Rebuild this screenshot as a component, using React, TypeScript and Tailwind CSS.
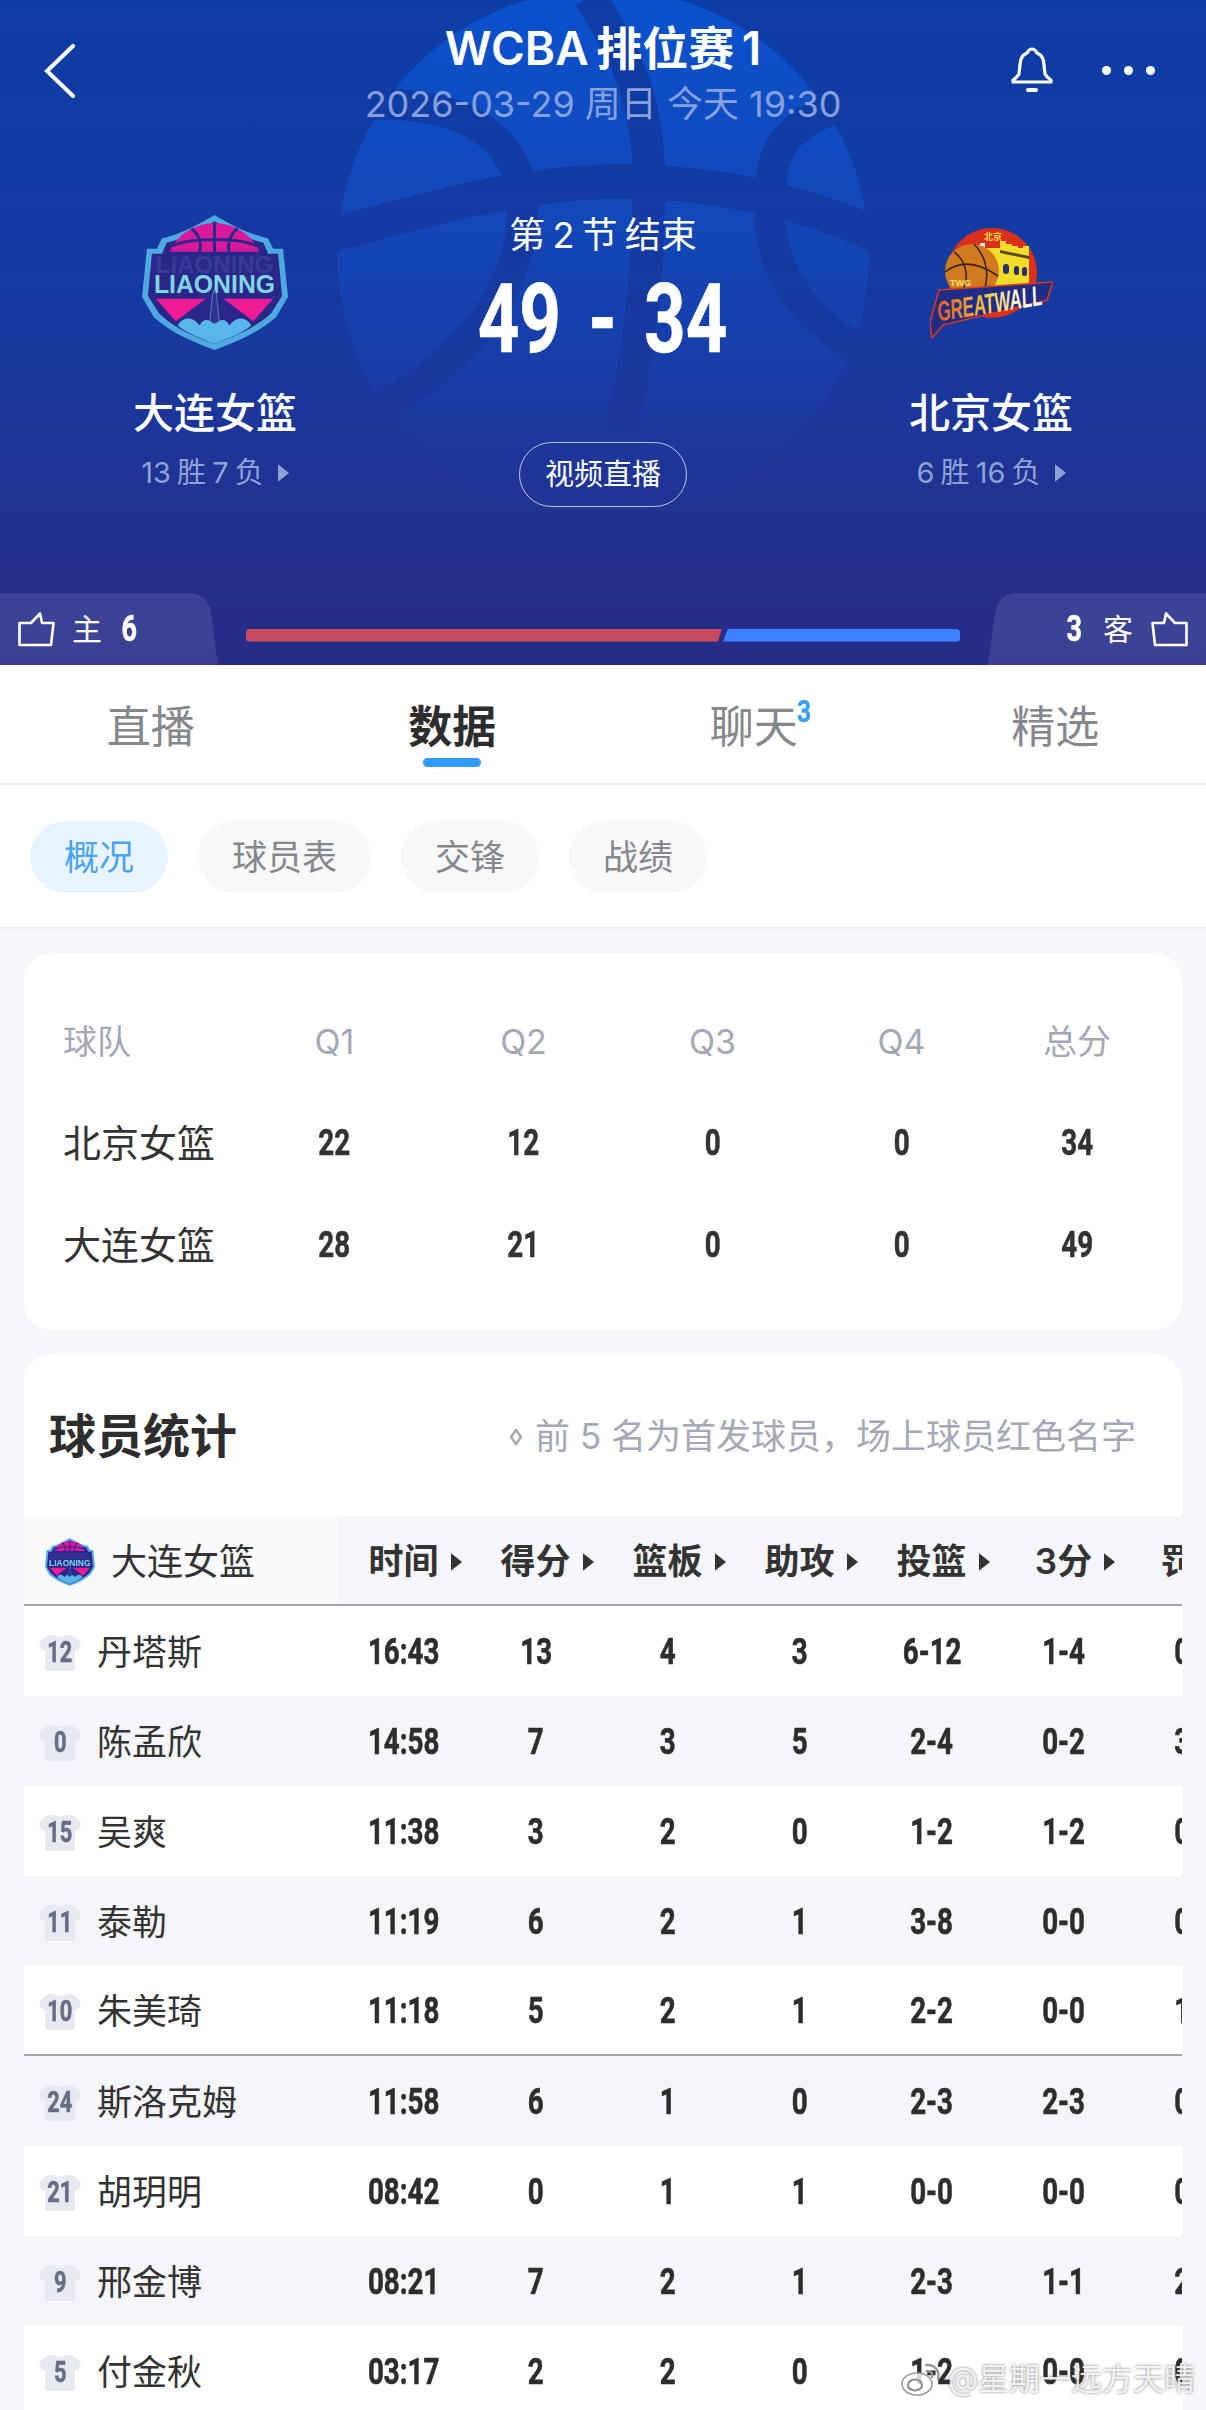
import React from 'react';

// column order: time, points, rebounds, assists, shots, threes, free throws
const PLAYERS = [
  { no: "12", name: "丹塔斯", stats: ["16:43", "13", "4", "3", "6-12", "1-4", "0-0"] },
  { no: "0", name: "陈孟欣", stats: ["14:58", "7", "3", "5", "2-4", "0-2", "3-3"] },
  { no: "15", name: "吴爽", stats: ["11:38", "3", "2", "0", "1-2", "1-2", "0-0"] },
  { no: "11", name: "泰勒", stats: ["11:19", "6", "2", "1", "3-8", "0-0", "0-0"] },
  { no: "10", name: "朱美琦", stats: ["11:18", "5", "2", "1", "2-2", "0-0", "1-1"], divider: true },
  { no: "24", name: "斯洛克姆", stats: ["11:58", "6", "1", "0", "2-3", "2-3", "0-0"] },
  { no: "21", name: "胡玥明", stats: ["08:42", "0", "1", "1", "0-0", "0-0", "0-0"] },
  { no: "9", name: "邢金博", stats: ["08:21", "7", "2", "1", "2-3", "1-1", "2-2"] },
  { no: "5", name: "付金秋", stats: ["03:17", "2", "2", "0", "1-2", "0-0", "0-0"] },
];

const STAT_HEADERS = ["时间", "得分", "篮板", "助攻", "投篮", "3分", "罚球"];

const QUARTERS = [
  { team: "北京女篮", scores: ["22", "12", "0", "0", "34"] },
  { team: "大连女篮", scores: ["28", "21", "0", "0", "49"] },
];

// the condensed DIN-like digits: Roboto bold squeezed sideways
function Num({ children, className }: { children: React.ReactNode; className?: string }) {
  return (
    <span className={`inline-block scale-x-[0.75] font-bold whitespace-nowrap [-webkit-text-stroke:0.6px_currentColor] [font-family:Roboto,sans-serif] ${className ?? ''}`}>
      {children}
    </span>
  );
}

function LiaoningLogo({ className }: { className: string }) {
  return (
    <svg viewBox="0 0 147 132" preserveAspectRatio="none" className={className}>
      <path d="M73 0 C90 10 106 18 127 23 L132 33 L142 33 L147 80 L135 100 C116 116 94 124 73 132 C52 124 30 116 12 100 L0 80 L5 33 L15 33 L20 23 C40 18 56 10 73 0 Z" fill="#4ea9e2" />
      <path d="M73 6 C90 15 105 23 122 27 L127 38 L137 38 L141 79 L130 96 C112 112 92 119 73 126 C54 119 34 112 17 96 L6 79 L10 38 L20 38 L25 27 C42 23 56 15 73 6 Z" fill="#29278a" />
      <path d="M28 36 C36 18 54 8 73 8 C92 8 110 18 118 36 Z" fill="#d9189a" />
      <path d="M73 8 V36 M50 13 C58 20 60 28 58 36 M96 13 C88 20 86 28 88 36 M31 30 C50 22 96 22 115 30" stroke="#29278a" strokeWidth="3" fill="none" />
      <text x="73" y="57" textAnchor="middle" fontSize="24" fontWeight="700" fill="#363a98" textLength="118" lengthAdjust="spacingAndGlyphs" fontFamily="Liberation Sans, sans-serif">LIAONING</text>
      <text x="73" y="76" textAnchor="middle" fontSize="25" fontWeight="700" fill="#7fd6e2" textLength="122" lengthAdjust="spacingAndGlyphs" fontFamily="Liberation Sans, sans-serif">LIAONING</text>
      <path d="M14 82 H64 L34 104 Z M132 82 H82 L112 104 Z" fill="#f01a97" />
      <path d="M68 106 L71 78 L73 72 L75 78 L78 106 Z" fill="#33308f" stroke="#4ea9e2" strokeWidth="0.7" />
      <path d="M36 108 C42 98 52 100 58 108 C62 100 68 102 73 107 C78 102 84 100 88 108 C94 100 104 98 110 108 C100 116 88 120 73 126 C58 120 46 116 36 108 Z" fill="#58b7e8" />
    </svg>
  );
}

function GreatWallLogo({ className }: { className: string }) {
  return (
    <svg viewBox="0 0 123 110" className={className}>
      <defs>
        <linearGradient id="gwText" x1="0" y1="0" x2="1" y2="0">
          <stop offset="0" stopColor="#e4551e" />
          <stop offset="0.45" stopColor="#f5c13c" />
          <stop offset="0.75" stopColor="#fff7c8" />
          <stop offset="1" stopColor="#ffffff" />
        </linearGradient>
      </defs>
      <circle cx="62" cy="45" r="45" fill="#dc2f1c" />
      <path d="M40 22 V17 H45 V20 H50 V15 H55 V62 H40 Z" fill="#f5f2da" />
      <path d="M55 20 H70 V13 H76 V16 H82 V18 H88 V20 H93 V18 H99 V60 H55 Z" fill="#f4dd2a" />
      <path d="M70 22 L99 28 V31 L70 25 Z" fill="#5d4a12" />
      <rect x="73" y="36" width="6" height="10" rx="3" fill="#26306e" />
      <rect x="84" y="38" width="5" height="9" rx="2.5" fill="#26306e" />
      <rect x="92" y="39" width="5" height="9" rx="2.5" fill="#26306e" />
      <circle cx="42" cy="43" r="27" fill="#d27a20" />
      <path d="M15 44 C30 32 48 34 68 48 M44 16 C58 30 60 50 52 68 M24 24 C38 34 40 54 30 66" stroke="#3a2210" strokeWidth="1.6" fill="none" />
      <text x="63" y="12" textAnchor="middle" fontSize="9" fontWeight="700" fill="#ffdf40" fontFamily="Noto Sans CJK SC, sans-serif">北京</text>
      <text x="20" y="58" fontSize="9" fontWeight="700" fill="#f7e36a" fontFamily="Liberation Sans, sans-serif">TWG</text>
      <path d="M9 62 L123 54 L117 72 L13 97 L2 110 L0 94 Z" fill="#1d2c86" stroke="#d8361f" strokeWidth="1.6" />
      <text x="61" y="85" textAnchor="middle" fontSize="28" fontWeight="700" fontStyle="italic" fill="url(#gwText)" textLength="106" lengthAdjust="spacingAndGlyphs" transform="rotate(-9 61 85)" fontFamily="Liberation Sans, sans-serif">GREATWALL</text>
    </svg>
  );
}

// faint basketball behind the header, the seams are cut out so the gradient shows through
function Ball() {
  return (
    <svg viewBox="0 0 1568 1568" className="absolute left-[320px] top-0 w-[570px] h-[570px]">
      <defs>
        <linearGradient id="ballFill" x1="0" y1="0" x2="0" y2="1">
          <stop offset="0" stopColor="#0a60e8" stopOpacity="0.62" />
          <stop offset="0.45" stopColor="#1258d8" stopOpacity="0.42" />
          <stop offset="0.8" stopColor="#1a50c8" stopOpacity="0.16" />
          <stop offset="1" stopColor="#1a50c8" stopOpacity="0" />
        </linearGradient>
        <mask id="seams">
          <rect x="0" y="0" width="1568" height="1568" fill="white" />
          <g stroke="black" fill="none">
            <path d="M740 -10 C850 150 905 300 905 500 C905 750 880 950 830 1180" strokeWidth="90" />
            <path d="M20 650 C250 590 500 510 780 500 C1050 495 1300 540 1540 650" strokeWidth="95" />
            <path d="M100 290 C350 270 530 350 555 530 C580 780 400 1000 150 1130" strokeWidth="85" />
            <path d="M1460 285 C1300 330 1240 400 1240 520 C1220 720 1300 850 1490 970" strokeWidth="85" />
          </g>
        </mask>
      </defs>
      <circle cx="779" cy="700" r="731" fill="url(#ballFill)" mask="url(#seams)" />
    </svg>
  );
}

function Tri({ className }: { className: string }) {
  return (
    <svg viewBox="0 0 10 16" className={`shrink-0 ${className}`}>
      <path d="M0 0 L10 8 L0 16 Z" fill="currentColor" />
    </svg>
  );
}

function Thumb({ className }: { className?: string }) {
  return (
    <svg viewBox="0 0 37 35" className={`w-[37px] h-[35px] shrink-0 ${className ?? ''}`} fill="none" stroke="white" strokeWidth="2.6" strokeLinejoin="round">
      <path d="M1.5 11 H13 L22 1.5 L24 11 H35.5 L33 33 H1.5 Z" />
    </svg>
  );
}

function Hero() {
  return (
    <div className="relative h-[665px] overflow-hidden bg-gradient-to-b from-[#0c3da5] via-[#16399f] to-[#272b85] flex flex-col text-white">
      <Ball />
      <div className="relative grid grid-cols-[1fr_auto_1fr] items-start h-[130px] pt-[21px]">
        <svg viewBox="0 0 32 54" className="w-[32px] h-[54px] mt-[23px] ml-[44px]" fill="none" stroke="white" strokeWidth="4" strokeLinecap="round">
          <path d="M29 2 L3 27 L29 52" />
        </svg>
        <div className="flex flex-col items-center">
          <div className="text-[46px] leading-[54px] font-semibold whitespace-nowrap [word-spacing:-4px]">WCBA 排位赛 1</div>
          <div className="text-[36px] leading-[50px] mt-[4px] text-[#86a1dd] whitespace-nowrap">2026-03-29 周日 今天 19:30</div>
        </div>
        <div className="flex items-center justify-end gap-[49px] mt-[26px] pr-[51px]">
          <svg viewBox="0 0 42 46" className="w-[42px] h-[46px]" fill="none" stroke="white" strokeWidth="3.2" strokeLinejoin="round">
            <path d="M21 2 C24 2 25 4 26 6 C31 8 33 12 33 18 L34 27 C35 29 37 31 40 33 V35 H2 V33 C5 31 7 29 8 27 L9 18 C9 12 11 8 16 6 C17 4 18 2 21 2 Z" />
            <rect x="15" y="41" width="12" height="4" rx="2" fill="white" stroke="none" />
          </svg>
          <div className="flex gap-[13px]">
            <span className="w-[9px] h-[9px] rounded-full bg-white" />
            <span className="w-[9px] h-[9px] rounded-full bg-white" />
            <span className="w-[9px] h-[9px] rounded-full bg-white" />
          </div>
        </div>
      </div>

      <div className="relative grid grid-cols-[430px_1fr_430px]">
        <div className="flex flex-col items-center">
          <LiaoningLogo className="w-[146px] h-[135px] mt-[85px]" />
          <div className="text-[41px] leading-[56px] font-medium mt-[35px]">大连女篮</div>
          <div className="flex items-center gap-[14px] mt-[10px] text-[29px] leading-[44px] text-[#8ea1d6]">
            <span className="[word-spacing:-2px]">13 胜 7 负</span>
            <Tri className="w-[11px] h-[18px]" />
          </div>
        </div>
        <div className="flex flex-col items-center pt-[80px]">
          <div className="text-[36px] leading-[50px] [word-spacing:-3px]">第 2 节 结束</div>
          <Num className="text-[97px] leading-[110px] mt-[4px] [word-spacing:12px]">49 - 34</Num>
          <div className="mt-[68px] w-[168px] h-[65px] flex items-center justify-center rounded-full border border-white/70 text-[29px]">视频直播</div>
        </div>
        <div className="flex flex-col items-center">
          <GreatWallLogo className="w-[123px] h-[110px] mt-[98px]" />
          <div className="text-[41px] leading-[56px] font-medium mt-[47px]">北京女篮</div>
          <div className="flex items-center gap-[14px] mt-[10px] text-[29px] leading-[44px] text-[#8ea1d6]">
            <span className="[word-spacing:-2px]">6 胜 16 负</span>
            <Tri className="w-[11px] h-[18px]" />
          </div>
        </div>
      </div>

      <div className="relative mt-auto flex items-center justify-between h-[72px]">
        <div className="w-[218px] h-full bg-white/10 [clip-path:path('M0_0_H187_Q208_0_211_20_L218_72_H0_Z')] flex items-center gap-[17px] pl-[18px] text-[30px]">
          <Thumb />
          <span>主</span>
          <Num className="text-[36px]">6</Num>
        </div>
        <div className="flex w-[714px] h-[13px] mt-[12px] gap-[1px]">
          <div className="w-[476px] bg-[#c84a5e] rounded-l-[4px] [clip-path:polygon(0_0,100%_0,calc(100%-4px)_100%,0_100%)]" />
          <div className="flex-1 bg-[#3f82ff] rounded-r-[4px] [clip-path:polygon(5px_0,100%_0,100%_100%,0_100%)]" />
        </div>
        <div className="w-[218px] h-full bg-white/10 [clip-path:path('M31_0_H218_V72_H0_L7_20_Q10_0_31_0_Z')] flex items-center justify-end gap-[18px] pr-[18px] text-[30px]">
          <Num className="text-[36px]">3</Num>
          <span>客</span>
          <Thumb className="scale-x-[-1]" />
        </div>
      </div>
    </div>
  );
}

function Tabs() {
  return (
    <div className="grid grid-cols-4 h-[120px] bg-white border-b-2 border-[#f0f0f2] text-[44px] text-[#85878c]">
      <div className="flex justify-center pt-[32px] leading-[60px]">直播</div>
      <div className="relative flex justify-center pt-[32px] leading-[60px] font-bold text-[#2d2d2d]">
        数据
        <span className="absolute top-[93px] w-[58px] h-[9px] rounded-full bg-[#3399ff]" />
      </div>
      <div className="relative flex justify-center pt-[32px] leading-[60px]">
        聊天
        <Num className="absolute left-[192px] top-[30px] text-[32px] leading-[32px] text-[#3aa0f5]">3</Num>
      </div>
      <div className="flex justify-center pt-[32px] leading-[60px]">精选</div>
    </div>
  );
}

function Pills() {
  return (
    <div className="flex gap-[30px] px-[30px] pt-[36px] h-[144px] bg-white border-b-2 border-[#f0f0f2] text-[35px]">
      <div className="h-[72px] px-[34px] flex items-center rounded-full bg-[#e8f4ff] text-[#4ba3f5]">概况</div>
      <div className="h-[72px] px-[34px] flex items-center rounded-full bg-[#f7f8fa] text-[#85878c]">球员表</div>
      <div className="h-[72px] px-[34px] flex items-center rounded-full bg-[#f7f8fa] text-[#85878c]">交锋</div>
      <div className="h-[72px] px-[34px] flex items-center rounded-full bg-[#f7f8fa] text-[#85878c]">战绩</div>
    </div>
  );
}

function ScoreCard() {
  const headers = ["Q1", "Q2", "Q3", "Q4", "总分"];
  const cols = "grid grid-cols-[216px_189px_189px_189px_189px_162px] items-center h-[102px]";
  return (
    <div className="bg-white rounded-[28px] h-[377px] pt-[37px] text-[#333]">
      <div className={`${cols} text-[#a4a8b5] text-[34px]`}>
        <div className="pl-[39px]">球队</div>
        {headers.map((h) => (
          <div key={h} className="text-center">{h}</div>
        ))}
      </div>
      {QUARTERS.map((row) => (
        <div key={row.team} className={cols}>
          <div className="pl-[39px] text-[38px] text-[#333] whitespace-nowrap">{row.team}</div>
          {row.scores.map((s, i) => (
            <div key={i} className="text-center">
              <Num className="text-[37px]">{s}</Num>
            </div>
          ))}
        </div>
      ))}
    </div>
  );
}

function Jersey({ no }: { no: string }) {
  return (
    <div className="relative w-[42px] h-[37px] shrink-0 flex items-center justify-center">
      <svg viewBox="0 0 42 37" className="absolute inset-0 w-[42px] h-[37px]">
        <path d="M10 1 H15 C17 3 25 3 27 1 H32 C37 3 40 6 42 10 L39 17 L36 16 V35 Q36 37 34 37 H8 Q6 37 6 35 V16 L3 17 L0 10 C2 6 5 3 10 1 Z" fill="#e8eaf1" />
      </svg>
      <Num className="relative text-[29px] leading-[37px] text-[#666e85]">{no}</Num>
    </div>
  );
}

function PlayerCard() {
  return (
    <div className="bg-white rounded-t-[28px] overflow-hidden mt-[24px]">
      <div className="flex items-center justify-between h-[162px] pl-[25px] pr-[46px] pt-[3px]">
        <div className="text-[47px] font-bold text-[#2d2d2d]">球员统计</div>
        <div className="flex items-center gap-[12px] text-[35px] text-[#a4a8b5]">
          <svg viewBox="0 0 14 18" className="w-[14px] h-[18px]" fill="none" stroke="#a4a8b5" strokeWidth="2.4">
            <path d="M7 2 L12 9 L7 16 L2 9 Z" />
          </svg>
          <span>前 5 名为首发球员，场上球员红色名字</span>
        </div>
      </div>

      <div className="flex h-[90px] border-b-2 border-[#a5a5ad] bg-[#f5f6fa]">
        <div className="w-[314px] shrink-0 flex items-center gap-[16px] pl-[21px] pt-[3px] bg-[#f9fafc] text-[36px] text-[#333]">
          <LiaoningLogo className="w-[50px] h-[48px]" />
          大连女篮
        </div>
        {STAT_HEADERS.map((h) => (
          <div key={h} className="w-[132px] shrink-0 flex items-center justify-center gap-[12px] pt-[3px] pl-[22px] text-[35px] font-semibold text-[#333] whitespace-nowrap">
            {h}
            <Tri className="w-[11px] h-[18px]" />
          </div>
        ))}
      </div>

      {PLAYERS.map((p, i) => (
        <div key={p.no} className={`flex h-[90px] pt-[2px] ${i % 2 === 1 ? 'bg-[#f5f6fa]' : 'bg-white'} ${p.divider ? 'border-b-2 border-[#a5a5ad]' : ''}`}>
          <div className="w-[314px] shrink-0 flex items-center gap-[16px] pl-[15px] text-[35px] text-[#333]">
            <Jersey no={p.no} />
            {p.name}
          </div>
          {p.stats.map((s, j) => (
            <div key={j} className="w-[132px] shrink-0 flex items-center justify-center text-[37px] text-[#2d2d2d]">
              <Num>{s}</Num>
            </div>
          ))}
        </div>
      ))}
    </div>
  );
}

export default function App() {
  return (
    <div className="relative w-[1206px] h-[2410px] overflow-hidden bg-[#f6f7fa] [font-family:Inter,'Noto_Sans_CJK_SC',sans-serif]">
      <Hero />
      <Tabs />
      <Pills />
      <div className="px-[24px] pt-[24px]">
        <ScoreCard />
        <PlayerCard />
      </div>
      {/* weibo watermark over the last row */}
      <div className="absolute right-[11px] bottom-[8px] flex items-center gap-[6px] text-[31px] text-white/85 [text-shadow:0_0_3px_rgba(70,70,70,0.75)]">
        <svg viewBox="0 0 42 36" className="w-[42px] h-[36px]" fill="none">
          <ellipse cx="17" cy="23" rx="15" ry="11" fill="white" fillOpacity="0.8" stroke="#9a9a9a" strokeWidth="1.5" />
          <ellipse cx="15" cy="24" rx="7" ry="5.5" stroke="#8a8a8a" strokeWidth="2" />
          <path d="M26 4 C35 3 40 10 38 18 M27 10 C31 10 33 12 32 16" stroke="#9a9a9a" strokeWidth="2.5" strokeLinecap="round" />
        </svg>
        <span>@星期一远方天晴</span>
      </div>
    </div>
  );
}
